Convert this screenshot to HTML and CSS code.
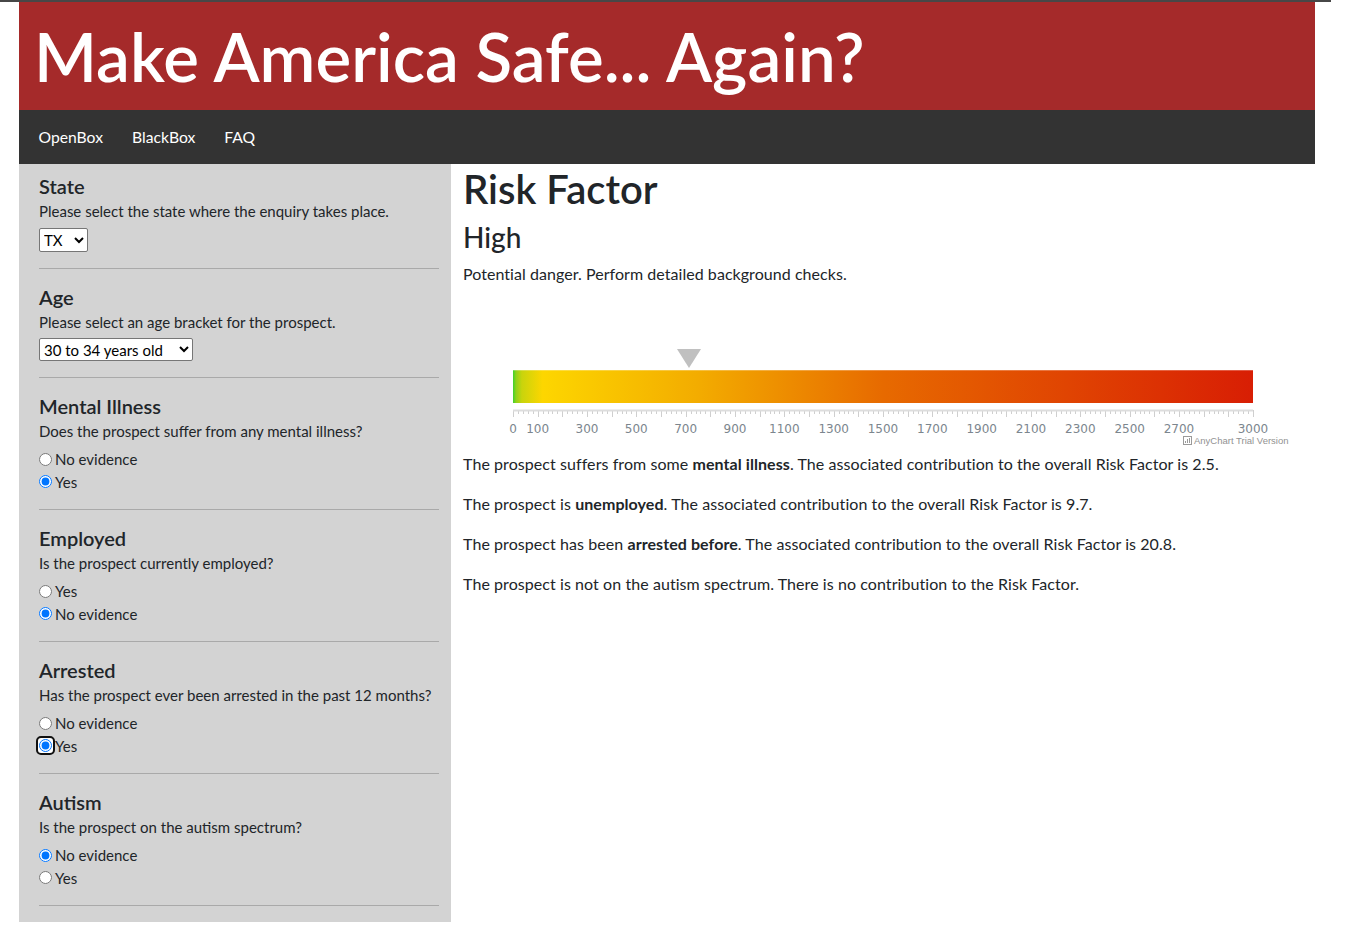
FILE: index.html
```html
<!DOCTYPE html>
<html lang="en">
<head>
<meta charset="utf-8">
<title>Make America Safe... Again?</title>
<link rel="stylesheet" href="styles.css">
</head>
<body>
<div class="topline"></div>
<div class="page">
  <header class="banner">
    <h1 class="title">Make America Safe... Again?</h1>
  </header>
  <nav class="navbar">
    <a class="nav-link" href="#">OpenBox</a>
    <a class="nav-link" href="#">BlackBox</a>
    <a class="nav-link" href="#">FAQ</a>
  </nav>
  <div class="row">
    <aside class="sidebar">
      <section class="field">
        <h5 class="field-title">State</h5>
        <p class="field-desc">Please select the state where the enquiry takes place.</p>
        <select class="sel sel-state"><option>TX</option></select>
      </section>
      <hr class="sep">
      <section class="field">
        <h5 class="field-title">Age</h5>
        <p class="field-desc">Please select an age bracket for the prospect.</p>
        <select class="sel sel-age"><option>30 to 34 years old</option></select>
      </section>
      <hr class="sep">
      <section class="field">
        <h5 class="field-title">Mental Illness</h5>
        <p class="field-desc">Does the prospect suffer from any mental illness?</p>
        <div class="radios">
          <label class="radio"><input type="radio" name="mi">No evidence</label>
          <label class="radio"><input type="radio" name="mi" checked>Yes</label>
        </div>
      </section>
      <hr class="sep">
      <section class="field">
        <h5 class="field-title">Employed</h5>
        <p class="field-desc">Is the prospect currently employed?</p>
        <div class="radios">
          <label class="radio"><input type="radio" name="em">Yes</label>
          <label class="radio"><input type="radio" name="em" checked>No evidence</label>
        </div>
      </section>
      <hr class="sep">
      <section class="field">
        <h5 class="field-title">Arrested</h5>
        <p class="field-desc">Has the prospect ever been arrested in the past 12 months?</p>
        <div class="radios">
          <label class="radio"><input type="radio" name="ar">No evidence</label>
          <label class="radio"><span class="focus-ring"><input type="radio" name="ar" checked></span>Yes</label>
        </div>
      </section>
      <hr class="sep">
      <section class="field">
        <h5 class="field-title">Autism</h5>
        <p class="field-desc">Is the prospect on the autism spectrum?</p>
        <div class="radios">
          <label class="radio"><input type="radio" name="au" checked>No evidence</label>
          <label class="radio"><input type="radio" name="au">Yes</label>
        </div>
      </section>
      <hr class="sep">
    </aside>
    <main class="main">
      <h1 class="risk-title">Risk Factor</h1>
      <h3 class="risk-level">High</h3>
      <p class="risk-note">Potential danger. Perform detailed background checks.</p>
      <div class="chart">
        <svg width="852" height="166" viewBox="0 0 852 166" xmlns="http://www.w3.org/2000/svg">
          <defs>
            <linearGradient id="grad" x1="0" y1="0" x2="1" y2="0">
              <stop offset="0" stop-color="#3fd12c"/>
              <stop offset="0.004" stop-color="#8fd21a"/>
              <stop offset="0.012" stop-color="#c9d40c"/>
              <stop offset="0.04" stop-color="#fdd600"/>
              <stop offset="0.25" stop-color="#f3ac00"/>
              <stop offset="0.5" stop-color="#e76a00"/>
              <stop offset="0.75" stop-color="#e04402"/>
              <stop offset="1" stop-color="#d81e04"/>
            </linearGradient>
          </defs>
          <polygon points="214,63 238,63 226,82" fill="#c0c0c0"/>
          <rect x="50" y="84" width="740" height="33" fill="url(#grad)"/>
          <rect x="50" y="84" width="740" height="1" fill="#ffffff" opacity="0.25"/>
          <g id="ticks" stroke="#cfcfcf" stroke-width="1"></g>
          <line x1="50" y1="124.5" x2="790" y2="124.5" stroke="#dddddd" stroke-width="2"/>
          <g class="axis-labels" fill="#7c868e" font-family="'DejaVu Sans', Verdana, sans-serif" font-size="12" text-anchor="middle">
            <text x="50" y="147">0</text>
            <text x="74.7" y="147">100</text>
            <text x="124" y="147">300</text>
            <text x="173.3" y="147">500</text>
            <text x="222.7" y="147">700</text>
            <text x="272" y="147">900</text>
            <text x="321.3" y="147">1100</text>
            <text x="370.7" y="147">1300</text>
            <text x="420" y="147">1500</text>
            <text x="469.3" y="147">1700</text>
            <text x="518.7" y="147">1900</text>
            <text x="568" y="147">2100</text>
            <text x="617.3" y="147">2300</text>
            <text x="666.7" y="147">2500</text>
            <text x="716" y="147">2700</text>
            <text x="790" y="147">3000</text>
          </g>
          <g fill="#9a9a9a">
            <rect x="720.5" y="150.5" width="8" height="8" fill="none" stroke="#9a9a9a" stroke-width="1"/>
            <rect x="722" y="155" width="1" height="2"/>
            <rect x="724" y="153" width="1" height="4"/>
            <rect x="726" y="152" width="1" height="5"/>
          </g>
          <text x="731" y="158" fill="#929292" font-family="'Liberation Sans', Arial, sans-serif" font-size="9.5">AnyChart Trial Version</text>
        </svg>
      </div>
      <p class="fact">The prospect suffers from some <b>mental illness</b>. The associated contribution to the overall Risk Factor is 2.5.</p>
      <p class="fact">The prospect is <b>unemployed</b>. The associated contribution to the overall Risk Factor is 9.7.</p>
      <p class="fact">The prospect has been <b>arrested before</b>. The associated contribution to the overall Risk Factor is 20.8.</p>
      <p class="fact">The prospect is not on the autism spectrum. There is no contribution to the Risk Factor.</p>
    </main>
  </div>
</div>
<script src="ticks.js"></script>
</body>
</html>
```
FILE: ticks.js
```js
(function () {
  var g = document.getElementById('ticks');
  var ns = 'http://www.w3.org/2000/svg';
  var scale = 740 / 3000;
  for (var v = 0; v <= 3000; v += 20) {
    var x = Math.round(50 + v * scale) + 0.5;
    var major = v % 100 === 0;
    var l = document.createElementNS(ns, 'line');
    l.setAttribute('x1', x);
    l.setAttribute('x2', x);
    l.setAttribute('y1', 124);
    l.setAttribute('y2', major ? 131 : 128);
    g.appendChild(l);
  }
})();
```
FILE: styles.css
```css
html, body {
  margin: 0;
  padding: 0;
  background: #ffffff;
}
body {
  font-family: Lato, "Open Sans", sans-serif;
  color: #212529;
  font-size: 16px;
  line-height: 1.5;
}
.topline {
  width: 1331px;
  height: 2px;
  background: #474747;
}
.page {
  width: 1296px;
  margin-left: 19px;
}
.banner {
  background: #a52a2a;
  height: 108px;
  display: flex;
  align-items: center;
  padding-left: 15px;
}
.title {
  margin: 0;
  color: #ffffff;
  font-size: 67.3px;
  font-weight: 600;
  line-height: 1;
  letter-spacing: 0;
  padding-top: 2px;
}
.navbar {
  background: #333333;
  height: 54px;
  box-sizing: border-box;
  padding: 2px 0 0 5px;
  display: flex;
  align-items: center;
}
.nav-link {
  color: #ffffff;
  text-decoration: none;
  font-size: 15.7px;
  padding: 0 14.5px;
}
.row {
  display: flex;
  align-items: flex-start;
}
.sidebar {
  width: 400px;
  background: #d3d3d3;
  padding: 10px 12px 0 20px;
}
.field-title {
  margin: 0 0 1px;
  font-size: 20px;
  font-weight: 600;
  line-height: 24px;
}
.field-desc {
  margin: 0;
  font-size: 15px;
  line-height: 24px;
}
.sel {
  display: block;
  font-family: Lato, sans-serif;
  font-size: 15px;
  color: #000;
  background: #fff;
  border: 1px solid #767676;
  border-radius: 2px;
}
.sel-state { width: 49px; height: 24px; margin-top: 5px; }
.sel-age { width: 154px; height: 23px; margin-top: 4px; }
.radios {
  margin-top: 5px;
  display: flex;
  flex-direction: column;
}
.radio {
  display: flex;
  align-items: center;
  height: 22.5px;
  font-size: 15px;
}
.radio input {
  margin: 0 3px 0 0;
  width: 13px;
  height: 13px;
}
.focus-ring {
  display: inline-flex;
  border: 2px solid #111;
  border-radius: 5px;
  padding: 1px;
  margin: -3px 0 -3px -3px;
  background: #fff;
}
.focus-ring input {
  margin: 0;
}
.sep {
  border: 0;
  border-top: 1px solid #a9a9a9;
  margin: 16px 0;
}
.main {
  flex: 1;
  padding-left: 12px;
}
.risk-title {
  margin: 1px 0 7px;
  font-size: 40px;
  font-weight: 600;
  line-height: 48px;
}
.risk-level {
  margin: 0 0 8px;
  font-size: 28px;
  font-weight: 500;
  line-height: 34px;
}
.risk-note {
  margin: 0;
  letter-spacing: 0.05px;
}
.chart {
  height: 166px;
}
.chart svg {
  display: block;
}
.fact {
  margin: 0 0 16px;
  letter-spacing: 0.07px;
}
.fact b {
  font-weight: 700;
}
```
